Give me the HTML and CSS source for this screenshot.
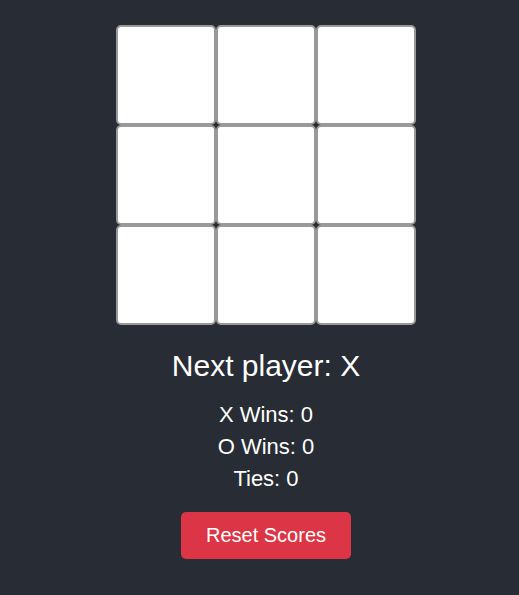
FILE: index.html
```html
<!DOCTYPE html>
<html>
<head>
<meta charset="utf-8">
<link rel="stylesheet" href="styles.css">
</head>
<body>
<div class="game">
  <div class="board">
    <button class="cell"></button>
    <button class="cell"></button>
    <button class="cell"></button>
    <button class="cell"></button>
    <button class="cell"></button>
    <button class="cell"></button>
    <button class="cell"></button>
    <button class="cell"></button>
    <button class="cell"></button>
  </div>
  <div class="status">Next player: X</div>
  <div class="scores">
    <div class="score">X Wins: 0</div>
    <div class="score">O Wins: 0</div>
    <div class="score">Ties: 0</div>
  </div>
  <button class="reset">Reset Scores</button>
</div>
</body>
</html>
```

FILE: styles.css
```css
html, body {
  margin: 0;
  padding: 0;
  background: #282c34;
  height: 100%;
}
body {
  font-family: "Liberation Sans", Arial, sans-serif;
  color: #ffffff;
}
.game {
  display: flex;
  flex-direction: column;
  align-items: center;
  padding-top: 25px;
  padding-left: 13px;
}
.board {
  display: grid;
  grid-template-columns: repeat(3, 100px);
  grid-template-rows: repeat(3, 100px);
}
.cell {
  box-sizing: border-box;
  width: 100px;
  height: 100px;
  margin: 0;
  padding: 0;
  background: #ffffff;
  border: 2px solid #999999;
  border-radius: 5px;
}
.status {
  margin-top: 23px;
  font-size: 30px;
  line-height: 36px;
}
.scores {
  margin-top: 15px;
  display: flex;
  flex-direction: column;
  align-items: center;
}
.score {
  font-size: 22px;
  line-height: 32px;
}
.reset {
  margin-top: 17px;
  box-sizing: border-box;
  height: 47px;
  padding: 0 25px;
  background: #dc3545;
  color: #ffffff;
  border: none;
  border-radius: 5px;
  font-family: "Liberation Sans", Arial, sans-serif;
  font-size: 20px;
}
```
